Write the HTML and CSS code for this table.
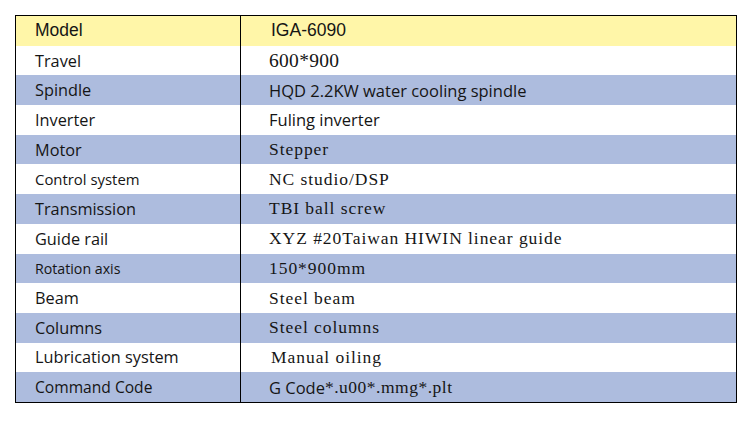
FILE: index.html
```html
<!DOCTYPE html>
<html>
<head>
<meta charset="utf-8">
<link rel="stylesheet" href="styles.css">
</head>
<body>
<div class="spec">
  <div class="row yellow"><div class="k arial">Model</div><div class="v arial shift">IGA-6090</div></div>
  <div class="row"><div class="k sans">Travel</div><div class="v times">600*900</div></div>
  <div class="row blue"><div class="k sans">Spindle</div><div class="v sans">HQD 2.2KW water cooling spindle</div></div>
  <div class="row"><div class="k sans">Inverter</div><div class="v sans">Fuling inverter</div></div>
  <div class="row blue"><div class="k sans">Motor</div><div class="v serif">Stepper</div></div>
  <div class="row"><div class="k sans small">Control system</div><div class="v serif">NC studio/DSP</div></div>
  <div class="row blue"><div class="k sans">Transmission</div><div class="v serif">TBI ball screw</div></div>
  <div class="row"><div class="k sans">Guide rail</div><div class="v serif">XYZ #20Taiwan HIWIN linear guide</div></div>
  <div class="row blue"><div class="k sans smaller">Rotation axis</div><div class="v serif">150*900mm</div></div>
  <div class="row"><div class="k sans">Beam</div><div class="v serif">Steel beam</div></div>
  <div class="row blue"><div class="k sans">Columns</div><div class="v serif">Steel columns</div></div>
  <div class="row"><div class="k sans">Lubrication system</div><div class="v serif shift">Manual oiling</div></div>
  <div class="row blue"><div class="k sans mid">Command Code</div><div class="v"><span class="sans">G Code</span><span class="serif tight">*.u00*.mmg*.plt</span></div></div>
</div>
</body>
</html>
```
FILE: styles.css
```css
html, body {
  margin: 0;
  padding: 0;
  background: #fff;
}
body {
  padding: 15px 0 0 15px;
  color: #151515;
}
.spec {
  width: 720px;
  border: 1px solid #000;
  display: flex;
  flex-direction: column;
}
.row {
  display: grid;
  grid-template-columns: 224px 1fr;
  height: 29.7px;
  background: #fff;
}
.row.yellow { background: #fff6a8; }
.row.blue { background: #adbcde; }
.k {
  display: flex;
  align-items: center;
  padding-left: 19px;
}
.v {
  display: flex;
  align-items: center;
  border-left: 1px solid #000;
  padding-left: 28px;
}
.v.shift { padding-left: 30px; }
.arial { font-family: "Liberation Sans", Arial, sans-serif; font-size: 17.5px; }
.sans { font-family: "Open Sans", "Noto Sans", sans-serif; font-size: 16.3px; }
.v.sans, .v .sans { font-size: 16.5px; }
.serif { font-family: "Liberation Serif", "Times New Roman", serif; font-size: 17.5px; letter-spacing: 0.95px; }
.serif.tight { letter-spacing: 0.5px; }
.times { font-family: "Liberation Serif", "Times New Roman", serif; font-size: 19.5px; letter-spacing: 0.3px; }
.small { font-size: 14.9px; }
.smaller { font-size: 14.2px; }
.mid { font-size: 15.6px; }
```
